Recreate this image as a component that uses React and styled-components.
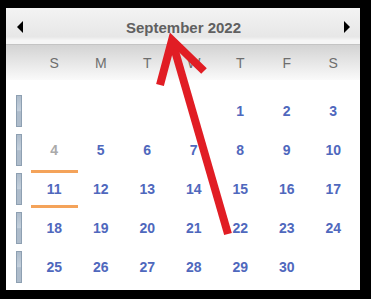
import styled, { createGlobalStyle } from "styled-components";

const Global = createGlobalStyle`
    html, body {
        margin: 0;
        padding: 0;
        background: #000;
        font-family: "Liberation Sans", Arial, sans-serif;
    }
`;

const Frame = styled.div`
    position: relative;
    width: 371px;
    height: 299px;
    padding: 8px 0 0 6px;
    box-sizing: border-box;
    overflow: hidden;
`;

const Panel = styled.div`
    width: 354px;
    height: 282px;
    background: #fff;
    display: flex;
    flex-direction: column;
`;

const Header = styled.div`
    height: 37px;
    box-sizing: border-box;
    display: flex;
    align-items: center;
    justify-content: space-between;
    padding: 0 10px 0 11px;
    background: linear-gradient(#f3f3f3, #e7e7e7 80%, #f6f6f6 90%);
    border-bottom: 1px solid #c4c4c4;
`;

const Title = styled.div`
    font-size: 15px;
    font-weight: bold;
    color: #606060;
    margin-top: 3px;
`;

const Tri = styled.div`
    width: 0;
    height: 0;
    border-top: 6px solid transparent;
    border-bottom: 6px solid transparent;
    ${p => p.$left ? "border-right: 6px solid #000;" : "border-left: 6px solid #000;"}
    margin-top: 2px;
`;

const Week = styled.div`
    height: 35px;
    display: grid;
    grid-template-columns: repeat(7, 46.5px);
    padding-left: 25px;
    align-items: center;
    background: linear-gradient(#d3d3d3, #fafafa);
`;

const Day = styled.div`
    text-align: center;
    font-size: 14px;
    color: #6e6e6e;
    margin-top: 1px;
`;

const Body = styled.div`
    padding-top: 11px;
    display: flex;
    flex-direction: column;
`;

const Row = styled.div`
    height: 39px;
    display: flex;
    align-items: center;
`;

const Marker = styled.div`
    width: 4px;
    height: 30px;
    margin-left: 10px;
    margin-right: 9px;
    background: linear-gradient(#aebccb, #c4d0dc 50%, #aebccb 52%);
    border: 1px solid #8ea0b2;
    box-sizing: content-box;
`;

const Cells = styled.div`
    display: grid;
    grid-template-columns: repeat(7, 46.5px);
    height: 100%;
`;

const Cell = styled.div`
    display: flex;
    align-items: center;
    justify-content: center;
    font-size: 14px;
    font-weight: bold;
    color: ${p => (p.$muted ? "#aaa" : "#4f68bd")};
    box-sizing: border-box;
    ${p => p.$today && "border-top: 3px solid #f4a35a; border-bottom: 3px solid #f4a35a; margin: 1px 0 0;"}
`;

const Overlay = styled.svg`
    position: absolute;
    left: 0;
    top: 0;
    pointer-events: none;
`;

const weeks = [
    [null, null, null, null, 1, 2, 3],
    [4, 5, 6, 7, 8, 9, 10],
    [11, 12, 13, 14, 15, 16, 17],
    [18, 19, 20, 21, 22, 23, 24],
    [25, 26, 27, 28, 29, 30, null],
];

export default function App() {
    return (
        <Frame>
            <Global />
            <Panel>
                <Header>
                    <Tri $left />
                    <Title>September 2022</Title>
                    <Tri />
                </Header>
                <Week>
                    {["S", "M", "T", "W", "T", "F", "S"].map((d, i) => (
                        <Day key={i}>{d}</Day>
                    ))}
                </Week>
                <Body>
                    {weeks.map((w, i) => (
                        <Row key={i}>
                            <Marker />
                            <Cells>
                                {w.map((d, j) => (
                                    <Cell key={j} $muted={d === 4} $today={d === 11}>
                                        {d}
                                    </Cell>
                                ))}
                            </Cells>
                        </Row>
                    ))}
                </Body>
            </Panel>
            <Overlay width="371" height="299" viewBox="0 0 371 299">
                <line x1="228" y1="234" x2="173" y2="44" stroke="#e11d24" strokeWidth="8" />
                <polyline
                    points="160,85 172,40 204,71"
                    fill="none"
                    stroke="#e11d24"
                    strokeWidth="8"
                    strokeLinejoin="miter"
                />
            </Overlay>
        </Frame>
    );
}
